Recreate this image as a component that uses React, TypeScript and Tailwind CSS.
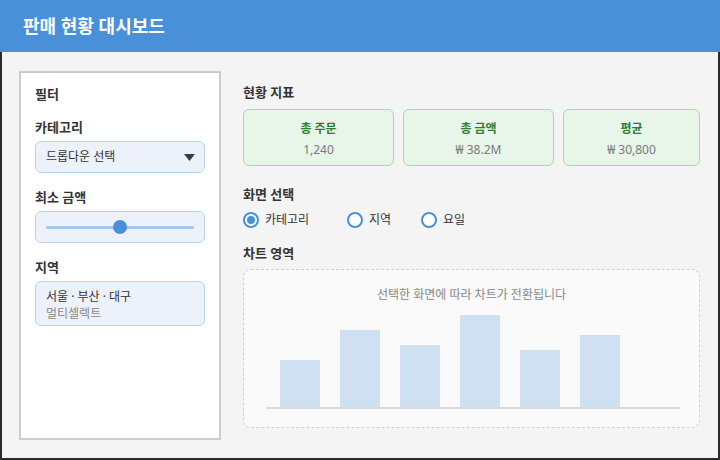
import React from "react";

const bars = [
  { h: "h-[47px]" },
  { h: "h-[77px]" },
  { h: "h-[62px]" },
  { h: "h-[92px]" },
  { h: "h-[57px]" },
  { h: "h-[72px]" },
];

function Label({ children, className = "" }: { children: React.ReactNode; className?: string }) {
  return (
    <div className={`h-[18px] leading-[18px] text-[13px] font-bold text-[#333333] ${className}`}>{children}</div>
  );
}

function Radio({ checked, label, className = "" }: { checked?: boolean; label: string; className?: string }) {
  return (
    <div className={`flex items-center ${className}`}>
      <div className="w-[16px] h-[16px] rounded-full border-2 border-[#4a90d9] bg-white flex items-center justify-center shrink-0">
        {checked && <div className="w-[8px] h-[8px] rounded-full bg-[#4a90d9]" />}
      </div>
      <span className="ml-[6px] text-[12px] leading-[16px] text-[#333333]">{label}</span>
    </div>
  );
}

function Card({ title, value, className = "" }: { title: string; value: string; className?: string }) {
  return (
    <div
      className={`h-[57px] rounded-[6px] border border-[#a9d8ab] bg-[#e8f5e9] flex flex-col items-center pt-[11px] ${className}`}
    >
      <div className="text-[12px] leading-[16px] font-bold text-[#2e7d32]">{title}</div>
      <div className="mt-[5px] text-[12px] leading-[16px] text-[#7a7a7a]">{value}</div>
    </div>
  );
}

export default function App() {
  return (
    <div className="w-[720px] h-[460px] flex flex-col font-['Noto_Sans','Noto_Sans_CJK_KR',sans-serif]">
      <div className="h-[52px] shrink-0 bg-[#4a90d9] flex items-center pl-[23px]">
        <h1 className="text-[18px] font-bold text-white leading-[24px]">판매 현황 대시보드</h1>
      </div>
      <div className="flex-1 flex border-x-2 border-b-2 border-[#2b2b2b] bg-[#f4f4f4] pl-[17px] pr-[16px] pt-[19px] pb-[16px] gap-[22px]">
        <aside className="w-[202px] h-[369px] shrink-0 border-2 border-[#cccccc] bg-white px-[14px] pt-[12px]">
          <Label>필터</Label>
          <Label className="mt-[15px]">카테고리</Label>
          <div className="mt-[5px] h-[32px] rounded-[6px] border border-[#bcd3ef] bg-[#edf2fa] flex items-center justify-between pl-[10px] pr-[9px]">
            <span className="text-[12px] leading-[16px] text-[#333333]">드롭다운 선택</span>
            <svg width="11" height="7" viewBox="0 0 11 7">
              <polygon points="0,0 11,0 5.5,7" fill="#2c3e50" />
            </svg>
          </div>
          <Label className="mt-[15px]">최소 금액</Label>
          <div className="mt-[5px] h-[32px] rounded-[6px] border border-[#bcd3ef] bg-[#edf2fa] flex items-center px-[10px]">
            <div className="relative w-full h-[3px] bg-[#a9c6ea] rounded-full">
              <div className="absolute left-[67px] top-[-6px] w-[14px] h-[14px] rounded-full bg-[#4a90d9]" />
            </div>
          </div>
          <Label className="mt-[15px]">지역</Label>
          <div className="mt-[5px] h-[45px] rounded-[6px] border border-[#bcd3ef] bg-[#edf2fa] pl-[10px] pt-[6px]">
            <div className="text-[12px] leading-[17px] text-[#333333]">서울 · 부산 · 대구</div>
            <div className="text-[12px] leading-[17px] text-[#888888]">멀티셀렉트</div>
          </div>
        </aside>
        <main className="w-[457px] flex flex-col">
          <Label className="mt-[12px]">현황 지표</Label>
          <div className="mt-[8px] flex gap-[9px]">
            <Card className="w-[151px]" title="총 주문" value="1,240" />
            <Card className="w-[151px]" title="총 금액" value="₩ 38.2M" />
            <Card className="w-[137px]" title="평균" value="₩ 30,800" />
          </div>
          <Label className="mt-[19px]">화면 선택</Label>
          <div className="mt-[9px] flex items-center">
            <Radio checked label="카테고리" className="w-[104px]" />
            <Radio label="지역" className="w-[74px]" />
            <Radio label="요일" />
          </div>
          <Label className="mt-[16px]">차트 영역</Label>
          <div className="mt-[7px] h-[159px] rounded-[8px] border border-dashed border-[#cfcfcf] bg-[#fafafa] pt-[17px]">
            <div className="text-center text-[12px] leading-[16px] text-[#888888]">선택한 화면에 따라 차트가 전환됩니다</div>
            <div className="ml-[22px] mr-[19px] mt-[12px]">
              <div className="h-[92px] flex items-end gap-[20px] pl-[14px]">
                {bars.map((b, i) => (
                  <div key={i} className={`w-[40px] bg-[#cfe0f2] ${b.h}`} />
                ))}
              </div>
              <div className="h-[2px] bg-[#d9d9d9]" />
            </div>
          </div>
        </main>
      </div>
    </div>
  );
}
